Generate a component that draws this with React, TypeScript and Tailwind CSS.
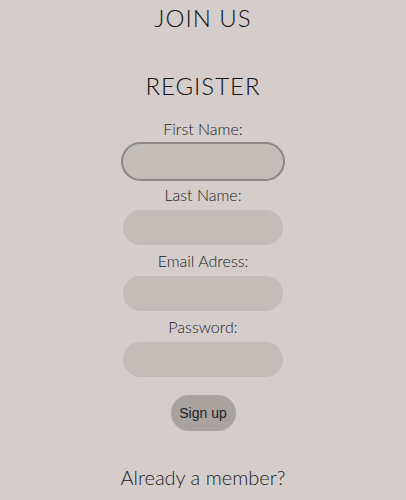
import { useEffect, useRef } from 'react'

const fields = ['First Name:', 'Last Name:', 'Email Adress:', 'Password:']

export default function App() {
	const first = useRef<HTMLInputElement>(null)

	useEffect(() => {
		first.current?.focus()
	}, [])

	return (
		<div className="flex h-[500px] w-full flex-col items-center bg-[#d4cdcb] font-['Lato',sans-serif] text-[#2a2a2a]">
			<h1 className="mt-[4px] text-[24px] font-light leading-[28px] tracking-[1px] text-[#111]">JOIN US</h1>
			<h2 className="mt-[40px] text-[24px] font-light leading-[28px] tracking-[1px] text-[#111]">REGISTER</h2>

			<form className="mt-[13px] flex flex-col items-center">
				{fields.map((label, i) => (
					<div key={label} className="flex flex-col items-center">
						<label className="flex h-[31px] items-center text-[16px] font-light text-[#222]">{label}</label>
						<input
							ref={i === 0 ? first : undefined}
							type={i === 3 ? 'password' : 'text'}
							className="h-[35px] w-[160px] rounded-full bg-[#c2bdb9] px-3 outline-none focus:ring-2 focus:ring-[#8d8884]"
						/>
					</div>
				))}
				<button
					type="button"
					className="mt-[18px] h-[36px] w-[65px] rounded-full bg-[#a9a3a0] font-['Liberation_Sans',sans-serif] text-[14px] text-[#222]"
				>
					Sign up
				</button>
			</form>

			<p className="mt-[31px] text-[20px] font-light text-[#222]">Already a member?</p>
		</div>
	)
}
